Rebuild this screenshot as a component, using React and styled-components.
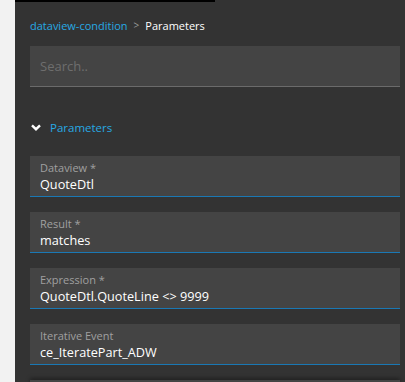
import React from "react";
import styled, { createGlobalStyle } from "styled-components";

const Global = createGlobalStyle`
  html, body { margin: 0; padding: 0; background: #f2f2f2; height: 100%; overflow: hidden; }
  body { font-family: "Open Sans", "Noto Sans", sans-serif; }
`;

const Page = styled.div`
  display: flex;
  height: 382px;
`;

const Gutter = styled.div`
  width: 15px;
  flex: none;
  background: #f2f2f2;
`;

const Panel = styled.div`
  flex: 1;
  background: #333333;
  display: flex;
  flex-direction: column;
  overflow: hidden;
`;

const TopBar = styled.div`
  height: 2px;
  width: 200px;
  background: #000;
  flex: none;
`;

const Header = styled.div`
  padding: 14px 5px 0 15px;
`;

const Crumbs = styled.div`
  display: flex;
  align-items: center;
  gap: 6px;
  font-size: 11px;
  height: 18px;
`;

const Crumb = styled.span`
  color: ${(p) => (p.$active ? "#ffffff" : "#27a9e3")};
`;

const Sep = styled.span`
  color: #9a9a9a;
  font-size: 10px;
`;

const Search = styled.input`
  display: block;
  box-sizing: border-box;
  margin-top: 12px;
  width: 100%;
  height: 41px;
  border: none;
  border-bottom: 1px solid #6b6b6b;
  background: #444444;
  padding: 0 10px;
  font-family: inherit;
  font-size: 13px;
  color: #ddd;
  outline: none;
  &::placeholder { color: #6e6e6e; }
`;

const Divider = styled.div`
  height: 1px;
  background: #4b4b4b;
  margin-top: 19px;
`;

const Section = styled.div`
  padding: 11px 5px 0 15px;
  display: flex;
  flex-direction: column;
`;

const SectionTitle = styled.div`
  display: flex;
  align-items: center;
  gap: 9px;
  height: 20px;
  padding-left: 1px;
  color: #27a9e3;
  font-size: 11.5px;
  margin-bottom: 19px;
`;

const Fields = styled.div`
  display: flex;
  flex-direction: column;
  gap: 15px;
`;

const Field = styled.div`
  box-sizing: border-box;
  height: 41px;
  background: #444444;
  border-bottom: 1px solid ${(p) => (p.$empty ? "#444" : "#1a78b4")};
  padding: 5px 10px 0;
  display: flex;
  flex-direction: column;
  box-shadow: ${(p) => (p.$raised ? "0 -2px 4px rgba(0,0,0,0.35)" : "none")};
`;

const Label = styled.div`
  color: #a0a0a0;
  font-size: 11px;
  line-height: 14px;
`;

const Value = styled.div`
  color: #ffffff;
  font-size: 12.7px;
  line-height: 19px;
`;

const Chevron = () => (
  <svg width="10" height="7" viewBox="0 0 10 7">
    <path d="M1 1.3 L5 5.2 L9 1.3" fill="none" stroke="#fff" strokeWidth="2.4" />
  </svg>
);

const fields = [
  { label: "Dataview *", value: "QuoteDtl" },
  { label: "Result *", value: "matches" },
  { label: "Expression *", value: "QuoteDtl.QuoteLine <> 9999" },
  { label: "Iterative Event", value: "ce_IteratePart_ADW" },
];

export default function App() {
  return (
    <Page>
      <Global />
      <Gutter />
      <Panel>
        <TopBar />
        <Header>
          <Crumbs>
            <Crumb>dataview-condition</Crumb>
            <Sep>&gt;</Sep>
            <Crumb $active>Parameters</Crumb>
          </Crumbs>
          <Search placeholder="Search.." />
        </Header>
        <Divider />
        <Section>
          <SectionTitle>
            <Chevron />
            Parameters
          </SectionTitle>
          <Fields>
            {fields.map((f) => (
              <Field key={f.label}>
                <Label>{f.label}</Label>
                <Value>{f.value}</Value>
              </Field>
            ))}
            <Field $raised $empty />
          </Fields>
        </Section>
      </Panel>
    </Page>
  );
}
